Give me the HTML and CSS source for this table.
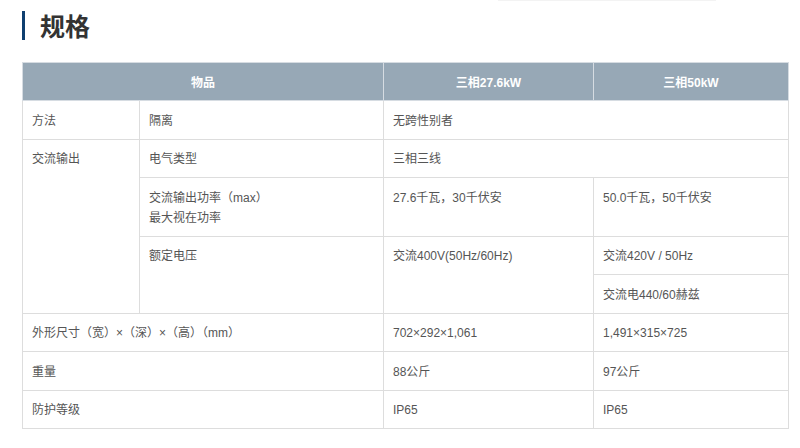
FILE: index.html
```html
<!DOCTYPE html>
<html lang="zh">
<head>
<meta charset="utf-8">
<link rel="stylesheet" href="styles.css">
</head>
<body>
<div class="page">
  <div class="topline"></div>
  <h2 class="title">规格</h2>
  <table class="spec">
    <colgroup>
      <col class="c1"><col class="c2"><col class="c3"><col class="c4">
    </colgroup>
    <thead>
      <tr><th colspan="2">物品</th><th>三相27.6kW</th><th>三相50kW</th></tr>
    </thead>
    <tbody>
      <tr><td>方法</td><td>隔离</td><td colspan="2">无跨性别者</td></tr>
      <tr><td rowspan="4">交流输出</td><td>电气类型</td><td colspan="2">三相三线</td></tr>
      <tr><td>交流输出功率（max）<br>最大视在功率</td><td>27.6千瓦，30千伏安</td><td>50.0千瓦，50千伏安</td></tr>
      <tr><td rowspan="2">额定电压</td><td rowspan="2">交流400V(50Hz/60Hz)</td><td>交流420V / 50Hz</td></tr>
      <tr><td>交流电440/60赫兹</td></tr>
      <tr><td colspan="2">外形尺寸（宽）×（深）×（高）（mm）</td><td>702×292×1,061</td><td>1,491×315×725</td></tr>
      <tr><td colspan="2">重量</td><td>88公斤</td><td>97公斤</td></tr>
      <tr><td colspan="2">防护等级</td><td>IP65</td><td>IP65</td></tr>
    </tbody>
  </table>
</div>
</body>
</html>
```

FILE: styles.css
```css
html, body {
  margin: 0;
  padding: 0;
  background: #ffffff;
}
.page {
  position: relative;
  padding: 11px 0 0 22px;
  font-family: "Liberation Sans", "Noto Sans CJK SC", sans-serif;
}
.topline {
  position: absolute;
  left: 498px;
  top: 0;
  width: 218px;
  height: 1px;
  background: #f3f3f3;
}
.title {
  margin: 0;
  height: 29px;
  line-height: 29px;
  border-left: 3px solid #0f3f70;
  padding-left: 15px;
  font-size: 25px;
  font-weight: bold;
  color: #333333;
  font-family: "Noto Sans CJK SC", sans-serif;
}
.spec {
  margin-top: 22px;
  width: 766px;
  border-collapse: collapse;
  table-layout: fixed;
  font-size: 12px;
  color: #555555;
}
.c1 { width: 117px; }
.c2 { width: 244px; }
.c3 { width: 210px; }
.c4 { width: 195px; }
.spec th {
  background: #97a8b6;
  color: #ffffff;
  font-weight: bold;
  height: 37px;
  padding: 0;
  text-align: center;
  border: 1px solid #d6dce2;
  font-size: 12px;
}
.spec td {
  border: 1px solid #dddddd;
  padding: 9.5px 9px 8px 9px;
  line-height: 20px;
  vertical-align: top;
  text-align: left;
}
```
